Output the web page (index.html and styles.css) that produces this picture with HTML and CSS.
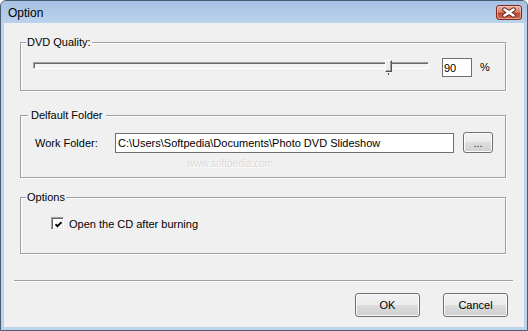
FILE: index.html
```html
<!DOCTYPE html>
<html lang="en">
  <head>
    <meta charset="UTF-8" />
    <title>Option</title>
    <link rel="stylesheet" href="styles.css">
  </head>
  <body>
    <div class="window">
      <div class="titlebar">
        <span class="title">Option</span>
        <button class="close-btn">
          <svg width="26" height="15" viewBox="0 0 26 15">
            <path d="M8.5 4.5 L17.5 10.5 M17.5 4.5 L8.5 10.5" stroke="#5a2118" stroke-width="4.4" stroke-linecap="round" fill="none" />
            <path d="M8.5 4.5 L17.5 10.5 M17.5 4.5 L8.5 10.5" stroke="#ffffff" stroke-width="2.6" stroke-linecap="round" fill="none" />
          </svg>
        </button>
      </div>

      <div class="client">
        <div class="group group-quality">
          <span class="group-label">DVD Quality:</span>
          <div class="row">
            <div class="slider">
              <div class="track"></div>
              <div class="thumb" style="left: 90%"></div>
              <div class="tick" style="left: 90%"></div>
            </div>
            <input class="textbox num" type="text" value="90" />
            <span class="unit">%</span>
          </div>
        </div>

        <div class="group group-folder">
          <span class="group-label wide">Delfault Folder</span>
          <div class="row">
            <span class="folder-label">Work Folder:</span>
            <input class="textbox path" type="text" value="C:\Users\Softpedia\Documents\Photo DVD Slideshow" />
            <button class="btn browse">...</button>
          </div>
        </div>

        <div class="group group-options">
          <span class="group-label">Options</span>
          <label class="row check-row">
            <span class="check-box">
              <svg width="7" height="7" viewBox="0 0 7 7">
                <path d="M0.5 3.2 L2.5 5.2 L6.5 1.2" stroke="#000" stroke-width="1.8" fill="none" />
              </svg>
            </span>
            <span class="check-text">Open the CD after burning</span>
          </label>
        </div>

        <div class="separator"></div>

        <div class="footer">
          <button class="btn dialog-btn">OK</button>
          <button class="btn dialog-btn">Cancel</button>
        </div>

        <span class="watermark">www.softpedia.com</span>
      </div>
    </div>
  </body>
</html>
```

FILE: styles.css
```css
/* Option dialog */
body {
  margin: 0;
  padding: 0;
  background: #ffffff;
  font-family: "Liberation Sans", Arial, sans-serif;
  font-size: 11px;
  color: #000;
}

.window {
  width: 528px;
  height: 331px;
  box-sizing: border-box;
  border: 1px solid #4b5d73;
  border-radius: 6px 6px 0 0;
  background: #bcd3eb;
  padding: 0 3px 3px;
  display: flex;
  flex-direction: column;
}

.titlebar {
  height: 22px;
  margin: 0 -3px;
  padding: 0 5px 0 7px;
  display: flex;
  align-items: center;
  justify-content: space-between;
  background: linear-gradient(to bottom, #a6c2e3, #bbd2ec);
  border-radius: 5px 5px 0 0;
}

.title {
  font-size: 12px;
  line-height: 14px;
  margin-top: 1px;
}

.close-btn {
  width: 26px;
  height: 15px;
  padding: 0;
  border: 1px solid #7d2a1e;
  border-radius: 3px;
  background: linear-gradient(to bottom, #eab0a2 0%, #d98571 45%, #c4452e 55%, #cf6a51 100%);
  box-shadow: inset 0 0 0 1px rgba(255, 220, 210, 0.5);
  display: flex;
  align-items: center;
  justify-content: center;
}

.close-btn svg {
  display: block;
  margin: -1px;
}

.client {
  flex: 1;
  position: relative;
  background: #f0f0f0;
  display: flex;
  flex-direction: column;
}

.group {
  position: relative;
  box-sizing: border-box;
  width: 486px;
  margin-left: 16px;
  border: 1px solid #a0a0a0;
  box-shadow: inset 1px 1px 0 #fff, 1px 1px 0 #fff;
}

.group-label {
  position: absolute;
  top: -7px;
  left: 5px;
  padding: 0 1px;
  line-height: 13px;
  background: #f0f0f0;
}

.group-label.wide {
  left: 7px;
  padding: 0 3px;
}

.row {
  display: flex;
  align-items: flex-start;
}

.group-quality {
  margin-top: 19px;
  height: 49px;
  padding: 15px 0 0 12px;
}

.group-folder {
  margin-top: 24px;
  height: 63px;
  padding: 16px 0 0 14px;
}

.group-folder .row {
  align-items: center;
}

.group-options {
  margin-top: 19px;
  height: 57px;
  padding: 19px 0 0 30px;
}

/* trackbar */
.slider {
  position: relative;
  width: 396px;
  height: 19px;
}

.track {
  margin-top: 4px;
  height: 7px;
  box-sizing: border-box;
  border: 1px solid;
  border-color: #a0a0a0 #fff #fff #a0a0a0;
  box-shadow: inset 1px 1px 0 #696969;
  background: #f4f4f4;
}

.thumb {
  position: absolute;
  top: 2px;
  width: 7px;
  height: 12px;
  margin-left: -4px;
  box-sizing: border-box;
  background: #ececec;
  border: 1px solid;
  border-color: #fff #555 #555 #fff;
  box-shadow: inset -1px -1px 0 #a0a0a0;
}

.tick {
  position: absolute;
  top: 15px;
  width: 1px;
  height: 2px;
  margin-left: -1px;
  background: #555;
}

.textbox {
  box-sizing: border-box;
  margin: 0;
  border: 1px solid #707070;
  background: #fff;
  font-family: inherit;
  font-size: 11px;
  color: #000;
  outline: none;
}

.num {
  width: 30px;
  height: 19px;
  margin-left: 13px;
  padding: 0 1px;
}

.unit {
  margin-left: 8px;
  margin-top: 3px;
}

.folder-label {
  width: 80px;
}

.path {
  width: 339px;
  height: 20px;
  padding: 0 2px;
}

.btn {
  box-sizing: border-box;
  margin: 0;
  padding: 0;
  border: 1px solid #707070;
  border-radius: 3px;
  background: linear-gradient(to bottom, #f2f2f2 0%, #ebebeb 50%, #dddddd 50%, #cfcfcf 100%);
  box-shadow: inset 0 0 0 1px #fbfbfb;
  font-family: inherit;
  font-size: 11px;
  color: #000;
}

.browse {
  width: 30px;
  height: 21px;
  margin-left: 9px;
  color: #333;
}

.check-row {
  align-items: center;
}

.check-box {
  box-sizing: border-box;
  width: 13px;
  height: 13px;
  border: 1px solid;
  border-color: #a0a0a0 #fff #fff #a0a0a0;
  box-shadow: inset 1px 1px 0 #696969, inset -1px -1px 0 #e3e3e3;
  background: #fff;
  display: flex;
  align-items: center;
  justify-content: center;
}

.check-box svg {
  display: block;
  margin: 1px 0 0 1px;
}

.check-text {
  margin-left: 5px;
  margin-top: 1px;
}

.separator {
  width: 499px;
  margin: 26px 0 0 10px;
  border-top: 1px solid #a0a0a0;
  border-bottom: 1px solid #fff;
}

.footer {
  display: flex;
  justify-content: flex-end;
  gap: 23px;
  margin-top: 11px;
  padding-right: 16px;
}

.dialog-btn {
  width: 65px;
  height: 24px;
}

.watermark {
  position: absolute;
  left: 183px;
  top: 135px;
  font-size: 10px;
  color: #dadada;
  text-shadow: 1px 1px 0 #fff;
}
```
